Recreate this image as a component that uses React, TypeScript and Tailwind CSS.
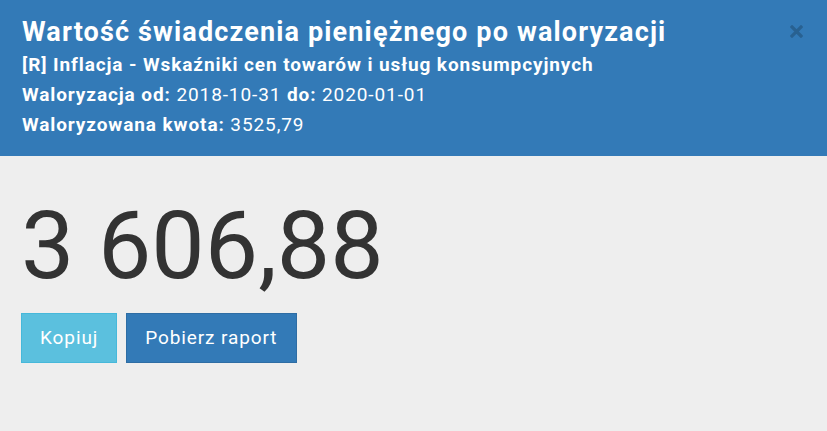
export default function App() {
  return (
    <div className="w-[827px] h-[431px] bg-[#eeeeee] font-['Roboto',sans-serif] overflow-hidden">
      <header className="relative bg-[#337ab7] text-white h-[156px] pl-[22px] pt-[14px]">
        <h1 className="text-[27px] leading-[36px] font-bold tracking-[1.15px]">
          Wartość świadczenia pieniężnego po waloryzacji
        </h1>
        <div className="text-[19px] leading-[30px] tracking-[0.9px]">
          <p className="font-bold">[R] Inflacja - Wskaźniki cen towarów i usług konsumpcyjnych</p>
          <p>
            <b>Waloryzacja od:</b> 2018-10-31 <b>do:</b> 2020-01-01
          </p>
          <p>
            <b>Waloryzowana kwota:</b> 3525,79
          </p>
        </div>
        <button className="absolute top-[25px] right-[24px] text-black opacity-20" aria-label="Zamknij">
          <svg width="13" height="13" viewBox="0 0 13 13">
            <path d="M2 2 L11 11 M11 2 L2 11" stroke="currentColor" strokeWidth="3.2" strokeLinecap="square" />
          </svg>
        </button>
      </header>
      <main className="pl-[21px] pt-[35px]">
        <div className="text-[95px] leading-[110px] text-[#333333]">3 606,88</div>
        <div className="flex gap-[9px] mt-[12px]">
          <button className="h-[50px] px-[18px] bg-[#5bc0de] border border-[#46b8da] text-white text-[19px] tracking-[0.9px]">
            Kopiuj
          </button>
          <button className="h-[50px] px-[18px] bg-[#337ab7] border border-[#2e6da4] text-white text-[19px] tracking-[0.9px]">
            Pobierz raport
          </button>
        </div>
      </main>
    </div>
  )
}
